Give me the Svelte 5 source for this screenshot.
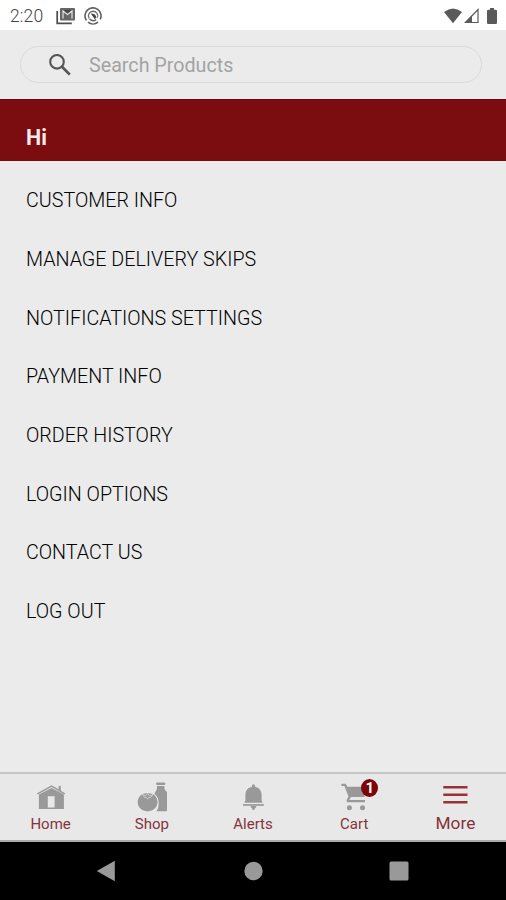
<script lang="ts">
	const menuItems = [
		'CUSTOMER INFO',
		'MANAGE DELIVERY SKIPS',
		'NOTIFICATIONS SETTINGS',
		'PAYMENT INFO',
		'ORDER HISTORY',
		'LOGIN OPTIONS',
		'CONTACT US',
		'LOG OUT'
	];

	const tabs = [
		{ id: 'home', label: 'Home' },
		{ id: 'shop', label: 'Shop' },
		{ id: 'alerts', label: 'Alerts' },
		{ id: 'cart', label: 'Cart' },
		{ id: 'more', label: 'More' }
	];

	let activeTab = $state('more');
	let cartCount = $state(1);
	let query = $state('');
</script>

<div class="screen">
	<div class="status-bar">
		<span class="clock">2:20</span>
		<svg class="mail" width="20" height="18" viewBox="0 0 20 18">
			<path d="M1.2 4v12.3h14.6" fill="none" stroke="#4c4c4c" stroke-width="1.7" />
			<rect x="4" y="1" width="15" height="12.5" rx="1" fill="#666" />
			<path d="M7 11.5V4l4.5 3.6L16 4v7.5" fill="none" stroke="#eee" stroke-width="1.1" />
			<path d="M7.5 3h8l-4 3z" fill="#444" />
		</svg>
		<svg class="at" width="18" height="18" viewBox="0 0 18 18" fill="none">
			<path d="M2.4 13.4A8 8 0 1 1 16.2 12.4" stroke="#606060" stroke-width="1.6" />
			<path d="M4 15.2a8 8 0 0 0 10 0" stroke="#606060" stroke-width="1.6" />
			<path d="M5.2 11.6A4.7 4.7 0 1 1 13.4 10.8" stroke="#707070" stroke-width="1.3" />
			<path d="M6.8 6.4q5-.2 5.6 4.4l-1.8 1.2z" fill="#444" />
			<path d="M5.6 12q3 3 6.6.6" stroke="#606060" stroke-width="1.4" />
		</svg>
		<div class="signals">
			<svg width="18" height="16" viewBox="0 0 18 16">
				<path d="M0 4Q9-3 18 4L9 15.2z" fill="#5a5a5a" />
			</svg>
			<svg width="15" height="16" viewBox="0 0 15 16">
				<path d="M1.5 14.5L14 1.5v13z" fill="none" stroke="#5a5a5a" stroke-width="1.2" />
				<path d="M.5 15L8 7.2V15z" fill="#5a5a5a" />
			</svg>
			<svg width="10" height="16" viewBox="0 0 10 16">
				<path d="M3 0h4v1.7h1.7Q10 1.7 10 3v11.7Q10 16 8.7 16H1.3Q0 16 0 14.7V3q0-1.3 1.3-1.3H3z" fill="#5a5a5a" />
			</svg>
		</div>
	</div>

	<div class="search-area">
		<label class="search-box">
			<svg width="22" height="22" viewBox="0 0 22 22" fill="none" stroke="#555">
				<circle cx="8" cy="7.8" r="6.8" stroke-width="2.1" />
				<path d="M13 12.8l7.8 7.8" stroke-width="2.7" />
			</svg>
			<input type="text" placeholder="Search Products" bind:value={query} />
		</label>
	</div>

	<div class="greeting">Hi</div>

	<ul class="menu">
		{#each menuItems as item}
			<li><button type="button">{item}</button></li>
		{/each}
	</ul>

	<nav class="tab-bar">
		{#each tabs as tab}
			<button
				type="button"
				class="tab"
				class:active={activeTab === tab.id}
				onclick={() => (activeTab = tab.id)}
			>
				<span class="tab-icon">
					{#if tab.id === 'home'}
						<svg width="30" height="30" viewBox="0 0 30 30" fill="#999">
							<path d="M1.4 11.8L15.6 4.2l13.2 7.6" fill="none" stroke="#999" stroke-width="1.5" />
							<path d="M22.6 4h2.2v5.2L22.6 8z" />
							<path fill-rule="evenodd" d="M2.9 12.6L15.6 6l12.3 6.6V27H2.9zM11.8 14.3v11.2h6.8V14.3z" />
						</svg>
					{:else if tab.id === 'shop'}
						<svg width="30" height="30" viewBox="0 0 30 30" fill="#999">
							<rect x="19.2" y=".6" width="9" height="2.4" rx=".7" />
							<path d="M20 4h7.4v2q0 1.6 1.3 2.7 1.5 1.2 1.5 3v16q0 1.6-1.6 1.6h-9.2q2.4-3.2 2.4-7.8 0-6.2-4.3-9.4.2-2 1.4-3.2Q20 7.6 20 6z" />
							<path d="M10.6 11.3c5.8-.8 9.9 3.4 9.9 8.8 0 5.2-4.2 9.3-9.9 9.3S.7 25.3.7 20.1s4.1-9.6 9.9-8.8z" />
							<path d="M5.4 12.4l3.3 1.4 1.9-2.4 1.9 2.4 3.6-1.4-2.4 3-2.2.2-.9 1.6-1-1.6-2.1-.2z" fill="none" stroke="#ccc" stroke-width="1" />
						</svg>
					{:else if tab.id === 'alerts'}
						<svg width="30" height="30" viewBox="0 0 30 30" fill="#999">
							<path d="M14 4.7v-.9a1.5 1.5 0 0 1 3 0v.9c4.1.9 6.6 3.9 6.6 8v5.8l1 2.2H6.4l1-2.2v-5.8c0-4.1 2.5-7.1 6.6-8z" />
							<path d="M5 22.1h20.8v1.7H5z" />
							<path d="M12.6 24h5.8q0 1.8-1.7 2.6v.6q0 .8-1.2.8t-1.2-.8v-.6q-1.7-.8-1.7-2.6z" />
						</svg>
					{:else if tab.id === 'cart'}
						<svg width="30" height="30" viewBox="0 0 30 30" fill="#999">
							<path d="M2.4 1.7h4.4l1.6 3.1H26L25.5 15H12l-1.8 3H26v2.3H9.1q-2.2-.4-1.3-2.6l1.7-3.2L5.4 4h-3z" />
							<circle cx="10.4" cy="25.8" r="2.5" />
							<circle cx="23.5" cy="25.8" r="2.5" />
						</svg>
						<span class="badge">{cartCount}</span>
					{:else}
						<svg width="30" height="30" viewBox="0 0 30 30" stroke="#973238" stroke-width="2.6">
							<path d="M3.3 5.2h24.2M3.3 12.7h24.2M3.3 20.2h24.2" />
						</svg>
					{/if}
				</span>
				<span class="tab-label">{tab.label}</span>
			</button>
		{/each}
	</nav>

	<div class="system-nav">
		<svg width="20" height="22" viewBox="0 0 20 22"><path d="M.8 11L18.8.7v20.6z" fill="#999" /></svg>
		<svg width="20" height="20" viewBox="0 0 20 20"><circle cx="10.5" cy="10" r="9.2" fill="#999" /></svg>
		<svg width="20" height="20" viewBox="0 0 20 20"><rect x=".5" y=".5" width="19" height="19" rx="1.5" fill="#999" /></svg>
	</div>
</div>

<style>
	:global(body) {
		margin: 0;
	}

	.screen {
		display: flex;
		flex-direction: column;
		width: 100%;
		height: 900px;
		overflow: hidden;
		background: #ebebeb;
		font-family: Roboto, 'Liberation Sans', sans-serif;
	}

	button {
		padding: 0;
		border: none;
		background: none;
		font-family: inherit;
		cursor: pointer;
	}

	svg {
		display: block;
		flex-shrink: 0;
	}

	.status-bar {
		display: flex;
		align-items: center;
		height: 30px;
		box-sizing: border-box;
		padding: 1px 9px 0 10px;
		background: #fff;
	}

	.clock {
		width: 46px;
		font-size: 17.5px;
		font-weight: 300;
		letter-spacing: 0.1px;
		line-height: 30px;
		color: #444;
	}

	.at {
		margin-left: 8px;
	}

	.signals {
		display: flex;
		align-items: center;
		margin-left: auto;
	}

	.signals svg:nth-child(2) {
		margin: 0 8px 0 2px;
	}

	.search-area {
		height: 69px;
		box-sizing: border-box;
		padding: 16px 24px 0 20px;
	}

	.search-box {
		display: flex;
		align-items: center;
		height: 37px;
		box-sizing: border-box;
		padding-left: 28px;
		border: 1px solid #dadada;
		border-radius: 19px;
	}

	.search-box input {
		flex: 1;
		min-width: 0;
		margin-left: 18px;
		padding: 2px 0 0;
		border: none;
		outline: none;
		background: transparent;
		font-family: inherit;
		font-size: 19.7px;
		color: #333;
	}

	.search-box input::placeholder {
		color: #a3a3a3;
	}

	.greeting {
		height: 62px;
		box-sizing: border-box;
		padding: 16px 26px 0;
		background: #7b0c0f;
		border-top: 1px solid #6d0a0c;
		color: #f4eaea;
		font-size: 21.5px;
		font-weight: 700;
		line-height: 44px;
	}

	.menu {
		flex: 1;
		margin: 0;
		padding: 10.4px 0 0;
		list-style: none;
	}

	.menu li {
		height: 58.7px;
	}

	.menu button {
		width: 100%;
		height: 100%;
		padding: 0 26px;
		text-align: left;
		font-size: 19.7px;
		font-weight: 300;
		color: #000;
	}

	.tab-bar {
		display: flex;
		height: 70px;
		box-sizing: border-box;
		border-top: 2px solid #c6c6c6;
		border-bottom: 2px solid #aaa;
		background: #e8e8e8;
	}

	.tab {
		flex: 1;
		display: flex;
		flex-direction: column;
		align-items: center;
		padding-top: 8px;
		color: #86333b;
	}

	.tab-icon {
		position: relative;
		height: 30px;
	}

	.tab-label {
		margin-top: 3px;
		font-size: 15px;
		line-height: 18px;
	}

	.tab.active .tab-label {
		margin-top: 1px;
		font-size: 17.3px;
		line-height: 20px;
	}

	.badge {
		position: absolute;
		top: -3px;
		right: -9px;
		width: 17px;
		height: 18px;
		border-radius: 50%;
		background: #7b0508;
		color: #fff;
		font-size: 15px;
		font-weight: 700;
		line-height: 18px;
		text-align: center;
	}

	.system-nav {
		display: flex;
		align-items: center;
		justify-content: space-between;
		height: 58px;
		box-sizing: border-box;
		padding: 0 97px 0 96px;
		background: #000;
	}
</style>
